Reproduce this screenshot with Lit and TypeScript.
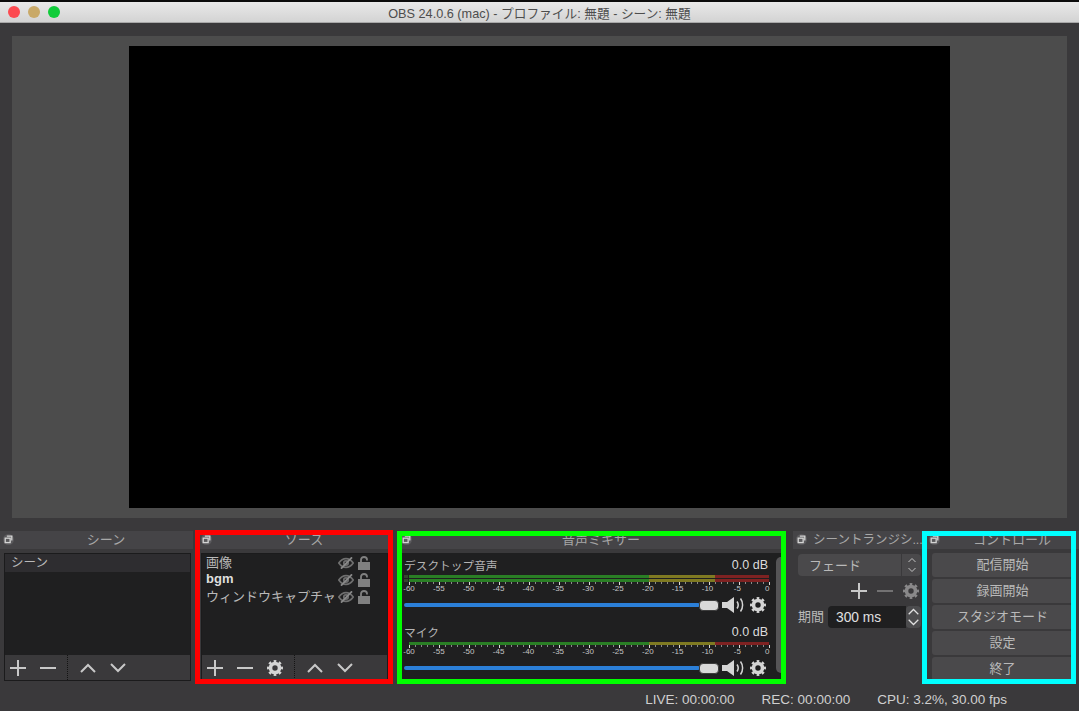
import { LitElement, css, html, svg } from "lit";
import { customElement } from "lit/decorators.js";

const TICKS = Array.from({ length: 61 }, (_, i) => i);
const LABELS = Array.from({ length: 13 }, (_, i) => i * 5);

const plusIcon = html`<svg class="ic" viewBox="0 0 16 16"><path d="M8 0v16M0 8h16" /></svg>`;
const minusIcon = html`<svg class="ic" viewBox="0 0 16 16"><path d="M0 8h16" /></svg>`;
const upIcon = html`<svg class="ic" viewBox="0 0 16 16"><path d="M1 12l7-7 7 7" /></svg>`;
const downIcon = html`<svg class="ic" viewBox="0 0 16 16"><path d="M1 4l7 7 7-7" /></svg>`;
const gearIcon = html`<svg class="ic gear" viewBox="0 0 16 16">
  <circle cx="8" cy="8" r="4.500" stroke-width="3.600" />
  <circle cx="8" cy="8" r="6.800" stroke-width="2.400" pathLength="16" stroke-dasharray="1 1" stroke-dashoffset="0.500" />
</svg>`;
const floatIcon = html`<svg class="float" viewBox="0 0 10 10">
  <circle class="halo" cx="5" cy="5" r="5" />
  <path d="M3.500 2h4.500v4" />
  <rect x="2" y="3.800" width="4.500" height="4" />
</svg>`;
const eyeIcon = html`<svg class="eye" viewBox="0 0 16 12">
  <path d="M.8 6C3 2.800 5.400 1.600 8 1.600S13 2.800 15.200 6C13 9.200 10.600 10.400 8 10.400S3 9.200.8 6z" />
  <circle cx="8" cy="6" r="2.200" />
  <path class="slash" d="M14 .3L3 11.700" />
</svg>`;
const lockIcon = html`<svg class="lock" viewBox="0 0 12 14">
  <path class="shackle" d="M3 7V3.800C3 2 4.200 1 6 1S9 2 9 3.800V4.500" />
  <rect x="0" y="6" width="12" height="8" />
</svg>`;
const speakerIcon = html`<svg class="speaker" viewBox="0 0 23 16">
  <path class="cone" d="M0 5h5l7-5v16l-7-5H0z" />
  <path d="M15 4.500c1.400 2 1.400 5 0 7M18.500 1.500c2.800 3.600 2.800 9.400 0 13" />
</svg>`;
const spinIcon = html`<svg class="spin" viewBox="0 0 10 18">
  <path d="M1.500 6l3.500-3.500L8.500 6M1.500 12l3.500 3.500L8.500 12" />
</svg>`;

@customElement("audio-strip")
export class AudioStrip extends LitElement {
  static properties = {
    name: { type: String },
    stereo: { type: Boolean },
  };
  name = "";
  stereo = false;

  render() {
    return html`
      <div class="head"><span>${this.name}</span><span class="db">0.0 dB</span></div>
      <div class="meter-row">
        <div class="peak">${this.stereo ? html`<i></i><i></i>` : ""}</div>
        <div class="channels">
          <div class="bar"><b class="g"></b><b class="y"></b><b class="r"></b></div>
          ${this.stereo ? html`<div class="bar"><b class="g"></b><b class="y"></b><b class="r"></b></div>` : ""}
        </div>
      </div>
      <svg class="scale" width="372" height="15" viewBox="0 0 372 15">
        ${TICKS.map((i) => {
          const x = 5.5 + i * 6;
          const major = i % 5 === 0;
          return svg`<path d="M${x} 0v${major ? 3 : 2}" stroke=${major ? "#d8d8d8" : "#8a8a8a"} />`;
        })}
        ${LABELS.map(
          (i) => svg`<text x=${5 + i * 5.97} y="9" text-anchor="middle">${i === 60 ? "0" : `-${60 - i}`}</text>`,
        )}
      </svg>
      <div class="vol">
        <div class="track"></div>
        <div class="handle"></div>
        ${speakerIcon}
        ${gearIcon}
      </div>
    `;
  }

  static styles = css`
    :host {
      display: block;
      color: #b4b4b4;
    }
    .head {
      display: flex;
      justify-content: space-between;
      align-items: center;
      box-sizing: border-box;
      height: 18px;
      width: 364px;
      padding-bottom: 3px;
      font-size: 11.700px;
    }
    .db {
      color: #dcdcdc;
      font-size: 12.500px;
    }
    .meter-row {
      display: flex;
    }
    .peak {
      width: 5px;
      display: flex;
      flex-direction: column;
      gap: 1px;
    }
    .peak i {
      display: block;
      width: 4px;
      height: 3px;
      background: #35452f;
    }
    .channels {
      width: 360px;
      display: flex;
      flex-direction: column;
      gap: 1px;
    }
    .bar {
      display: flex;
      height: 3px;
    }
    .bar b {
      display: block;
    }
    .g {
      width: 240px;
      background: #2a7f25;
    }
    .y {
      width: 66px;
      background: #7f7a22;
    }
    .r {
      width: 54px;
      background: #7f2222;
    }
    .scale {
      display: block;
      overflow: visible;
    }
    .scale text {
      font: 8px "Liberation Sans", sans-serif;
      fill: #c4c4c4;
    }
    .vol {
      display: flex;
      align-items: center;
      height: 16px;
    }
    .track {
      width: 296px;
      height: 4px;
      background: #2b7fd8;
      border-radius: 2px;
    }
    .handle {
      box-sizing: border-box;
      width: 20px;
      height: 11px;
      margin-left: -1px;
      background: #d9d9d9;
      border: 1px solid #3c3c3c;
      border-radius: 4px;
    }
    .speaker {
      width: 23px;
      height: 16px;
      margin-left: 3px;
      flex: none;
    }
    .speaker path {
      fill: none;
      stroke: #d4d4d4;
      stroke-width: 1.500;
    }
    .speaker .cone {
      fill: #d4d4d4;
      stroke: none;
    }
    .gear {
      width: 16px;
      height: 16px;
      margin-left: 5px;
      flex: none;
      fill: none;
      stroke: #d4d4d4;
    }
  `;
}

@customElement("app-root")
export class AppRoot extends LitElement {
  private toolbar(gear: boolean) {
    return html`
      <div class="toolbar">
        <span class="tb">${plusIcon}</span>
        <span class="tb">${minusIcon}</span>
        ${gear ? html`<span class="tb">${gearIcon}</span>` : ""}
        <span class="sep"></span>
        <span class="tb">${upIcon}</span>
        <span class="tb">${downIcon}</span>
      </div>
    `;
  }

  private dockTitle(text: string) {
    return html`<div class="dock-title">${floatIcon}<span class="title-text">${text}</span></div>`;
  }

  private sourceRow(name: string, bold = false) {
    return html`
      <div class="source-row">
        <span class="source-name ${bold ? "bold" : ""}">${name}</span>
        ${eyeIcon}${lockIcon}
      </div>
    `;
  }

  render() {
    return html`
      <header class="titlebar">
        <div class="lights"><i class="red"></i><i class="amber"></i><i class="green"></i></div>
        <div class="win-title">OBS 24.0.6 (mac) - プロファイル: 無題 - シーン: 無題</div>
        <div></div>
      </header>

      <div class="preview"><div class="canvas"></div></div>

      <section class="docks">
        <div class="dock scenes">
          ${this.dockTitle("シーン")}
          <div class="box">
            <div class="list"><div class="scene-row">シーン</div></div>
            ${this.toolbar(false)}
          </div>
        </div>

        <div class="dock sources">
          ${this.dockTitle("ソース")}
          <div class="box">
            <div class="list source-list">
              ${this.sourceRow("画像")}
              ${this.sourceRow("bgm", true)}
              ${this.sourceRow("ウィンドウキャプチャ")}
            </div>
            ${this.toolbar(true)}
          </div>
          <div class="frame frame-red"></div>
        </div>

        <div class="dock mixer">
          ${this.dockTitle("音声ミキサー")}
          <div class="mixer-box">
            <div class="strips">
              <audio-strip name="デスクトップ音声" stereo></audio-strip>
              <audio-strip name="マイク"></audio-strip>
            </div>
            <div class="scrollbar"></div>
          </div>
          <div class="frame frame-green"></div>
        </div>

        <div class="dock transitions">
          ${this.dockTitle("シーントランジシ...")}
          <div class="trans-body">
            <div class="combo"><span class="combo-text">フェード</span><span class="combo-arrows">${spinIcon}</span></div>
            <div class="trans-tools">
              ${plusIcon}
              <span class="dim">${minusIcon}</span>
              <span class="dim">${gearIcon}</span>
            </div>
            <div class="duration">
              <span class="duration-label">期間</span>
              <div class="spinbox">300 ms</div>
              <div class="stepper"><span>${upIcon}</span><span>${downIcon}</span></div>
            </div>
          </div>
        </div>

        <div class="dock controls">
          ${this.dockTitle("コントロール")}
          <div class="buttons">
            ${["配信開始", "録画開始", "スタジオモード", "設定", "終了"].map(
              (label) => html`<div class="btn">${label}</div>`,
            )}
          </div>
          <div class="frame frame-cyan"></div>
        </div>
      </section>

      <footer class="status">
        <span>LIVE: 00:00:00</span>
        <span>REC: 00:00:00</span>
        <span>CPU: 3.2%, 30.00 fps</span>
      </footer>
    `;
  }

  static styles = css`
    :host {
      display: flex;
      flex-direction: column;
      height: 711px;
      overflow: hidden;
      background: #3a393b;
      color: #b9b9b9;
      font: 13px "Liberation Sans", "Noto Sans CJK JP", sans-serif;
    }
    .titlebar {
      display: grid;
      grid-template-columns: 1fr auto 1fr;
      align-items: center;
      height: 23px;
      flex: none;
      box-sizing: border-box;
      background: linear-gradient(#e9e9e9, #d3d3d3);
      border-top: 2px solid #0c0c0c;
      border-bottom: 1px solid #a8a8a8;
    }
    .lights {
      display: flex;
      gap: 8px;
      padding-left: 8px;
    }
    .lights i {
      width: 12px;
      height: 12px;
      border-radius: 50%;
    }
    .red {
      background: #fc4a50;
    }
    .amber {
      background: #c9a968;
    }
    .green {
      background: #10cc3a;
    }
    .win-title {
      font-size: 12.700px;
      color: #4d4d4d;
    }
    .preview {
      flex: none;
      box-sizing: border-box;
      height: 482px;
      margin: 13px 12px;
      padding: 10px 117px;
      background: #4c4c4c;
    }
    .canvas {
      height: 100%;
      background: #000;
    }
    .docks {
      flex: none;
      display: flex;
      height: 153px;
    }
    .dock {
      position: relative;
      display: flex;
      flex-direction: column;
    }
    .scenes {
      width: 193px;
      margin-right: 5px;
    }
    .sources {
      width: 193px;
      margin-right: 7px;
    }
    .mixer {
      width: 387px;
      margin-right: 8px;
    }
    .transitions {
      width: 129px;
      margin-right: 4px;
    }
    .controls {
      width: 153px;
    }
    .dock-title {
      position: relative;
      flex: none;
      display: flex;
      align-items: center;
      box-sizing: border-box;
      height: 18px;
      padding: 0 2px 3px 21px;
      background: #454447;
      font-size: 13px;
      color: #a8a8a8;
    }
    .title-text {
      flex: 1;
      text-align: center;
      white-space: nowrap;
    }
    .transitions .dock-title {
      padding-left: 20px;
      padding-right: 0;
      font-size: 12.500px;
    }
    .transitions .title-text {
      text-align: left;
    }
    .float {
      position: absolute;
      left: 3px;
      top: 3px;
      width: 11px;
      height: 11px;
      fill: none;
      stroke: #d4d4d4;
      stroke-width: 1.200;
    }
    .float .halo {
      fill: #5a595c;
      stroke: none;
    }
    .box {
      flex: 1;
      display: flex;
      flex-direction: column;
      box-sizing: border-box;
      margin: 4px 2px 3px 4px;
      border: 1px solid #1b1b1c;
    }
    .sources .box {
      margin-left: 3px;
      margin-right: 3px;
    }
    .list {
      flex: 1;
      background: #1f1f20;
    }
    .scene-row {
      height: 18px;
      line-height: 18px;
      padding-left: 6px;
      background: #2e2d30;
      font-size: 12.500px;
    }
    .source-list {
      display: flex;
      flex-direction: column;
    }
    .source-row {
      display: flex;
      align-items: center;
      height: 17px;
      padding-left: 4px;
      font-size: 13px;
    }
    .source-name {
      width: 132px;
      padding-bottom: 2px;
      white-space: nowrap;
    }
    .bold {
      font-weight: 700;
      color: #dedede;
    }
    .eye {
      width: 16px;
      height: 12px;
      fill: none;
      stroke: #6f6f6f;
      stroke-width: 1.700;
    }
    .eye .slash {
      stroke: #8a8a8a;
    }
    .lock {
      width: 12px;
      height: 14px;
      margin-left: 4px;
      fill: #808080;
    }
    .shackle {
      fill: none;
      stroke: #808080;
      stroke-width: 1.800;
    }
    .toolbar {
      flex: none;
      display: flex;
      align-items: center;
      gap: 4px;
      height: 25px;
      background: #3a393b;
    }
    .tb {
      display: flex;
      justify-content: center;
      width: 26px;
    }
    .sep {
      height: 100%;
      margin: 0 3px 0 2px;
      border-left: 1px dotted #141414;
    }
    .ic {
      width: 16px;
      height: 16px;
      fill: none;
      stroke: #c8c8c8;
      stroke-width: 2;
    }
    .ic.gear {
      stroke: #d4d4d4;
    }
    .mixer-box {
      flex: 1;
      display: flex;
      justify-content: space-between;
      margin: 4px 1px 0;
      padding-left: 5px;
      background: #1f1f20;
    }
    .strips {
      display: flex;
      flex-direction: column;
      gap: 11px;
      padding-top: 4px;
    }
    .scrollbar {
      width: 9px;
      height: 116px;
      margin-top: 4px;
      background: #555456;
      border-radius: 5px 0 0 5px;
    }
    .trans-body {
      padding: 5px 1px 0 5px;
    }
    .combo {
      display: flex;
      align-items: center;
      height: 22px;
      background: #4a494b;
      border-radius: 4px;
    }
    .combo-text {
      flex: 1;
      padding: 0 0 1px 11px;
    }
    .combo-arrows {
      display: flex;
      align-items: center;
      justify-content: center;
      width: 19px;
      height: 100%;
      border-left: 1px solid #3a393b;
    }
    .spin {
      width: 10px;
      height: 18px;
      fill: none;
      stroke: #c4c4c4;
      stroke-width: 1;
    }
    .trans-tools {
      display: flex;
      justify-content: flex-end;
      align-items: center;
      gap: 10px;
      height: 16px;
      margin: 7px 2px 7px 0;
    }
    .trans-tools .dim {
      display: flex;
      opacity: 0.4;
    }
    .trans-tools .dim .gear {
      stroke: #fff;
    }
    .duration {
      display: flex;
      align-items: center;
      height: 22px;
    }
    .duration-label {
      padding-bottom: 3px;
    }
    .spinbox {
      width: 70px;
      height: 100%;
      line-height: 23px;
      margin-left: 4px;
      padding-left: 8px;
      background: #1f1f20;
      border-radius: 4px 0 0 4px;
      color: #e0e0e0;
      font-size: 13.800px;
    }
    .stepper {
      display: flex;
      flex-direction: column;
      gap: 1px;
      width: 15px;
      height: 100%;
      background: #4c4c4e;
      border-radius: 4px;
    }
    .stepper span {
      display: flex;
      justify-content: center;
      align-items: center;
      height: 10.500px;
    }
    .stepper .ic {
      width: 11px;
      height: 11px;
      stroke: #e0e0e0;
      stroke-width: 1.800;
    }
    .buttons {
      display: flex;
      flex-direction: column;
      gap: 2px;
      padding: 4px 6px 0 6px;
    }
    .btn {
      height: 24px;
      line-height: 24px;
      text-align: center;
      background: #4a494b;
      border-radius: 3px;
      font-size: 13px;
    }
    .frame {
      position: absolute;
      box-sizing: border-box;
      bottom: 0;
      border-style: solid;
      border-width: 5px;
      pointer-events: none;
    }
    .frame-red {
      left: -3px;
      right: -2px;
      top: -1px;
      border-color: #ff0000;
    }
    .frame-green {
      left: -1px;
      right: -1px;
      top: 0;
      border-color: #00ff00;
    }
    .frame-cyan {
      left: -4px;
      right: 3px;
      top: 0;
      border-color: #00ffff;
    }
    .status {
      flex: 1;
      display: flex;
      justify-content: flex-end;
      align-items: center;
      gap: 27px;
      padding: 3px 72px 0 0;
      font-size: 13.500px;
      color: #d0d0d0;
    }
  `;
}
